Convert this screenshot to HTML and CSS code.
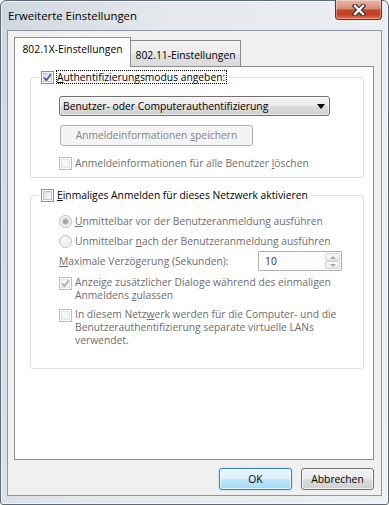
FILE: index.html
```html
<!DOCTYPE html>
<html lang="de">
<head>
    <meta charset="UTF-8">
    <title>Erweiterte Einstellungen</title>
    <link rel="stylesheet" href="styles.css">
</head>
<body>
    <div class="window">
        <div class="titlebar">
            <span class="title">Erweiterte Einstellungen</span>
            <span class="close">
                <svg width="14" height="12" viewBox="0 0 14 12">
                    <path d="M3 2 L11 10 M11 2 L3 10" stroke="#3e2a26" stroke-width="4.6" stroke-linecap="square"/>
                    <path d="M3 2 L11 10 M11 2 L3 10" stroke="#fff" stroke-width="2.4" stroke-linecap="square"/>
                </svg>
            </span>
        </div>

        <div class="client">
            <div class="tabs">
                <div class="tab active">802.1X-Einstellungen</div>
                <div class="tab">802.11-Einstellungen</div>
            </div>

            <div class="panel">
                <fieldset class="group">
                    <legend>
                        <span class="check checked"></span>
                        <span class="focus"><u>A</u>uthentifizierungsmodus angeben:</span>
                    </legend>
                    <div class="group-body">
                        <div class="select">
                            Benutzer- oder Computerauthentifizierung
                            <span class="arrow"></span>
                        </div>
                        <div class="btn-disabled">Anmeldeinformationen <u>s</u>peichern</div>
                        <div class="row disabled gap-10">
                            <span class="check off"></span>
                            <span>Anmeldeinformationen für alle Benutzer <u>l</u>öschen</span>
                        </div>
                    </div>
                </fieldset>

                <fieldset class="group group-sso">
                    <legend>
                        <span class="check"></span>
                        <span><u>E</u>inmaliges Anmelden für dieses Netzwerk aktivieren</span>
                    </legend>
                    <div class="group-body sso-body">
                        <div class="row disabled">
                            <span class="radio on"></span>
                            <span><u>U</u>nmittelbar vor der Benutzeranmeldung ausführen</span>
                        </div>
                        <div class="row disabled gap-6">
                            <span class="radio"></span>
                            <span>Unmittelbar <u>n</u>ach der Benutzeranmeldung ausführen</span>
                        </div>
                        <div class="spin-row disabled">
                            <span class="spin-label"><u>M</u>aximale Verzögerung (Sekunden):</span>
                            <div class="spin">
                                <span class="spin-value">10</span>
                                <span class="spin-buttons">
                                    <span class="spin-btn"><span class="tri-up"></span></span>
                                    <span class="spin-btn"><span class="tri-down"></span></span>
                                </span>
                            </div>
                        </div>
                        <div class="row multi disabled gap-5">
                            <span class="check off checked"></span>
                            <span>Anzeige zusätzlicher Dialoge während des einmaligen<br>Anmeldens <u>z</u>ulassen</span>
                        </div>
                        <div class="row multi disabled gap-6">
                            <span class="check off"></span>
                            <span>In diesem Netz<u>w</u>erk werden für die Computer- und die<br>Benutzerauthentifizierung separate virtuelle LANs<br>verwendet.</span>
                        </div>
                    </div>
                </fieldset>
            </div>

            <div class="buttons">
                <button class="dlg-btn default">OK</button>
                <button class="dlg-btn">Abbrechen</button>
            </div>
        </div>
    </div>
</body>
</html>
```

FILE: styles.css
```css
body {
    margin: 0;
    background-color: #fff;
    font-family: "Open Sans", "Noto Sans", sans-serif;
    font-size: 10.3px;
    color: #000;
}

u {
    text-decoration-thickness: 1px;
    text-underline-offset: 1px;
}

/* window frame */
.window {
    width: 389px;
    height: 505px;
    box-sizing: border-box;
    display: flex;
    flex-direction: column;
    padding: 0 6px 8px 6px;
    border: 1px solid #5f6a76;
    border-radius: 6px 6px 3px 3px;
    background: linear-gradient(100deg, #d0d7df 0%, #e4e8ed 35%, #eef1f4 100%);
    box-shadow: inset 0 0 0 1px rgba(255, 255, 255, 0.6);
}

.titlebar {
    height: 29px;
    display: flex;
    align-items: flex-start;
}

.title {
    padding: 8px 0 0 1px;
    font-size: 11.4px;
    line-height: 13px;
}

.close {
    margin-left: auto;
    margin-top: -1px;
    width: 47px;
    height: 20px;
    box-sizing: border-box;
    display: flex;
    align-items: center;
    justify-content: center;
    border: 1px solid #6b2e22;
    border-top: none;
    border-radius: 0 0 4px 4px;
    background: linear-gradient(#ebb6a8 0%, #dc8e7a 45%, #c9492e 52%, #c13d22 75%, #e2744f 100%);
    box-shadow: inset 0 0 0 1px rgba(255, 255, 255, 0.35);
}

/* client area */
.client {
    flex: 1;
    display: flex;
    flex-direction: column;
    padding: 6px 6px 0 6px;
    border: 1px solid #8c97a3;
    background-color: #f0f0f0;
}

.tabs {
    display: flex;
    align-items: flex-end;
    height: 29px;
}

.tab {
    width: 110px;
    height: 26px;
    box-sizing: border-box;
    padding-top: 8px;
    line-height: 13px;
    text-align: center;
    border: 1px solid #898c95;
    border-bottom: none;
    border-left: none;
    background: linear-gradient(#f3f3f3 0%, #ececec 50%, #e2e2e2 50%, #dadada 100%);
}

.tab.active {
    position: relative;
    z-index: 1;
    width: 117px;
    height: 30px;
    margin-bottom: -1px;
    padding-top: 5px;
    border-left: 1px solid #898c95;
    background: #fff;
}

.panel {
    width: 360px;
    height: 394px;
    box-sizing: border-box;
    padding: 3px 9px 0 15px;
    border: 1px solid #898c95;
    background-color: #fff;
}

/* group boxes */
.group {
    margin: 0;
    padding: 0;
    min-width: 0;
    border: 1px solid #d5dfe5;
    border-radius: 3px;
}

.group-sso {
    margin-top: 10px;
}

legend {
    margin-left: 8px;
    padding: 0 2px;
    height: 14px;
    display: flex;
    align-items: center;
    gap: 3px;
    line-height: 12px;
}

.focus {
    margin-left: -1px;
    border: 1px dotted #000;
    padding: 0 1px 0 0;
}

.group-body {
    padding: 12px 0 7px 28px;
    white-space: nowrap;
}

.sso-body {
    padding-bottom: 21px;
}

.select {
    width: 271px;
    height: 20px;
    box-sizing: border-box;
    display: flex;
    align-items: center;
    padding-left: 3px;
    border: 1px solid #707070;
    border-radius: 3px;
    background: linear-gradient(#f2f2f2 0%, #ebebeb 50%, #dddddd 50%, #cfcfcf 100%);
    box-shadow: inset 0 0 0 1px rgba(255, 255, 255, 0.6);
}

.arrow {
    margin-left: auto;
    margin-right: 4px;
    border-left: 4px solid transparent;
    border-right: 4px solid transparent;
    border-top: 5px solid #000;
}

.btn-disabled {
    width: 193px;
    height: 21px;
    box-sizing: border-box;
    margin: 9px 0 0 1px;
    line-height: 19px;
    text-align: center;
    color: #838383;
    border: 1px solid #adb2b5;
    border-radius: 3px;
    background-color: #f4f4f4;
}

.row {
    display: flex;
    align-items: flex-start;
    gap: 3px;
    line-height: 14px;
}

.row.multi {
    line-height: 13px;
}

.gap-10 { margin-top: 10px; }
.gap-6 { margin-top: 6px; }
.gap-5 { margin-top: 5px; }

.disabled {
    color: #6d6d6d;
}

/* checkbox and radio */
.check,
.radio {
    flex-shrink: 0;
    width: 13px;
    height: 13px;
    box-sizing: border-box;
    margin-top: 1px;
    border: 1px solid #8e8f8f;
    background: linear-gradient(135deg, #d5d8dd 0%, #f0f1f3 60%, #fbfbfb 100%);
    box-shadow: inset 0 0 0 1px #fff, inset 0 0 0 2px #c2c6cc;
}

legend .check {
    margin-top: 0;
}

.check.checked {
    background-image: url("data:image/svg+xml;utf8,<svg xmlns='http://www.w3.org/2000/svg' width='11' height='11'><path d='M2.2 5.6 L4.4 8.2 L8.8 2.2' fill='none' stroke='%234a5f97' stroke-width='1.8'/></svg>"), linear-gradient(135deg, #d5d8dd 0%, #f0f1f3 60%, #fbfbfb 100%);
    background-repeat: no-repeat;
    background-position: center;
}

.check.off {
    border-color: #bcbcbc;
    background: #f4f4f4;
    box-shadow: inset 0 0 0 1px #fff, inset 0 0 0 2px #e3e3e3;
}

.check.off.checked {
    background: #f4f4f4 url("data:image/svg+xml;utf8,<svg xmlns='http://www.w3.org/2000/svg' width='11' height='11'><path d='M2.2 5.6 L4.4 8.2 L8.8 2.2' fill='none' stroke='%23a9a9a9' stroke-width='1.6'/></svg>") no-repeat center;
}

.radio {
    border-radius: 50%;
    border-color: #bcbcbc;
    background: radial-gradient(circle at 40% 35%, #fbfbfb 0%, #e6e6e6 100%);
    box-shadow: inset 0 0 0 1px #f7f7f7;
}

.radio.on {
    background: radial-gradient(circle, #9a9a9a 0, #b4b4b4 2.5px, #e9e9e9 3.5px, #f4f4f4 100%);
}

/* spin box */
.spin-row {
    display: flex;
    align-items: center;
    height: 20px;
    margin-top: 3px;
}

.spin-label {
    width: 199px;
}

.spin {
    width: 84px;
    height: 20px;
    box-sizing: border-box;
    display: flex;
    align-items: center;
    border: 1px solid #afafaf;
    border-radius: 1px;
    background-color: #fcfcfc;
}

.spin-value {
    padding-left: 6px;
    color: #333;
}

.spin-buttons {
    margin-left: auto;
    margin-right: 1px;
    width: 15px;
    height: 16px;
    display: flex;
    flex-direction: column;
}

.spin-btn {
    flex: 1;
    display: flex;
    align-items: center;
    justify-content: center;
    border: 1px solid #d4d4d4;
    border-radius: 2px;
    background: linear-gradient(#f7f7f7, #ececec);
}

.tri-up {
    border-left: 3px solid transparent;
    border-right: 3px solid transparent;
    border-bottom: 3px solid #a8a8a8;
}

.tri-down {
    border-left: 3px solid transparent;
    border-right: 3px solid transparent;
    border-top: 3px solid #a8a8a8;
}

/* dialog buttons */
.buttons {
    display: flex;
    justify-content: flex-end;
    gap: 9px;
    margin-top: 8px;
    padding-right: 1px;
}

.dlg-btn {
    width: 73px;
    height: 22px;
    padding: 0;
    font-family: inherit;
    font-size: inherit;
    color: #000;
    border: 1px solid #707070;
    border-radius: 3px;
    background: linear-gradient(#f2f2f2 0%, #ebebeb 50%, #dddddd 50%, #cfcfcf 100%);
    box-shadow: inset 0 0 0 1px rgba(255, 255, 255, 0.7);
}

.dlg-btn.default {
    border-color: #3c7fb1;
    background: linear-gradient(#e9f6fd 0%, #d9f0fc 50%, #bee6fd 50%, #a7d9f5 100%);
    box-shadow: inset 0 0 0 1px rgba(255, 255, 255, 0.8), 0 0 2px #7fd0f5;
}
```
